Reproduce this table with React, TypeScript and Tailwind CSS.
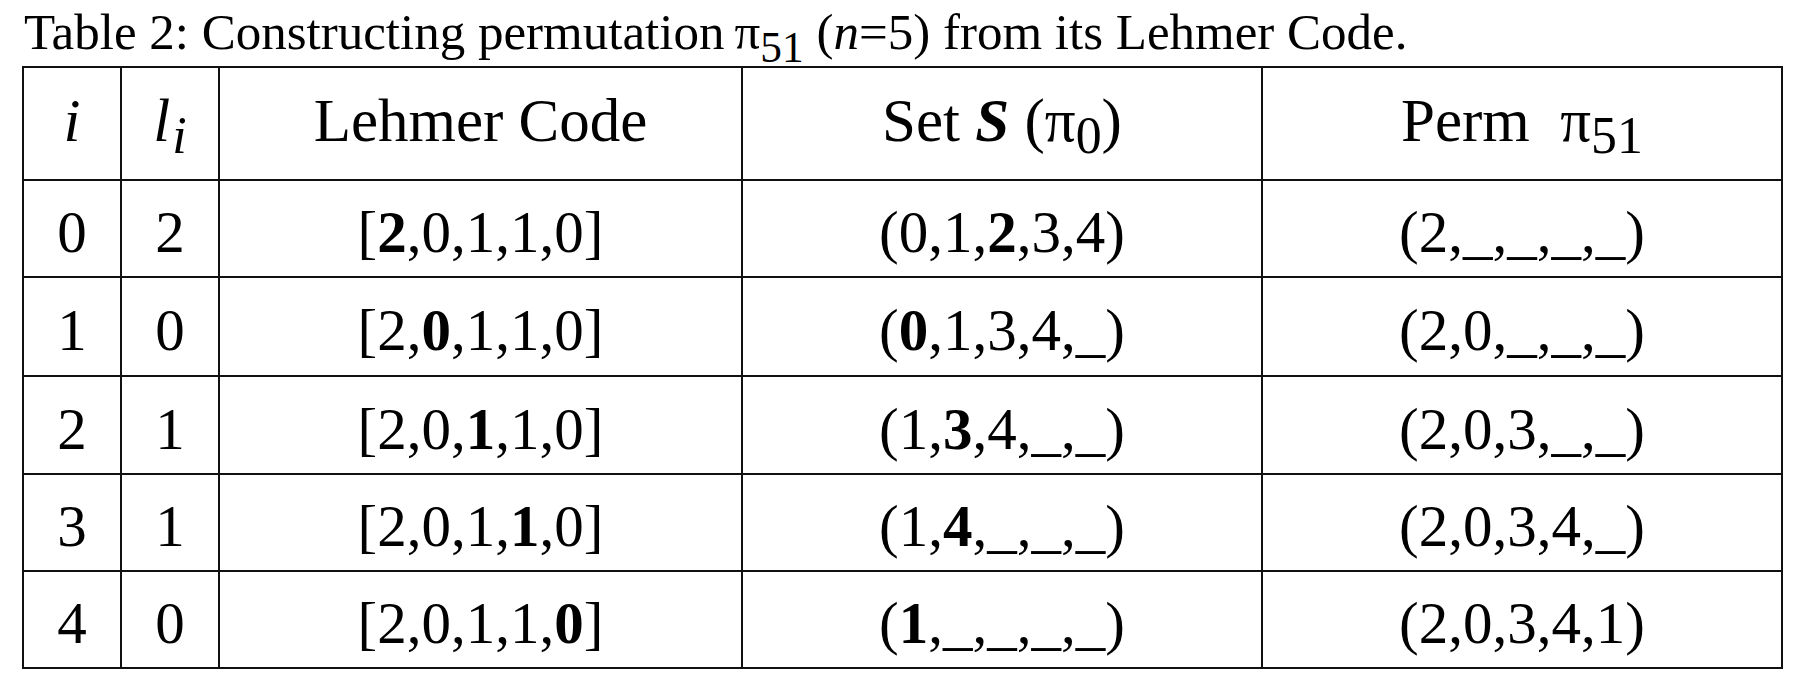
import React from 'react';

type Row = {
  i: string;
  l: string;
  code: string[];
  codeBold: number;
  set: string[];
  setBold: number;
  perm: string[];
};

const ROWS: Row[] = [
  { i: '0', l: '2', code: ['2', '0', '1', '1', '0'], codeBold: 0, set: ['0', '1', '2', '3', '4'], setBold: 2, perm: ['2', '_', '_', '_', '_'] },
  { i: '1', l: '0', code: ['2', '0', '1', '1', '0'], codeBold: 1, set: ['0', '1', '3', '4', '_'], setBold: 0, perm: ['2', '0', '_', '_', '_'] },
  { i: '2', l: '1', code: ['2', '0', '1', '1', '0'], codeBold: 2, set: ['1', '3', '4', '_', '_'], setBold: 1, perm: ['2', '0', '3', '_', '_'] },
  { i: '3', l: '1', code: ['2', '0', '1', '1', '0'], codeBold: 3, set: ['1', '4', '_', '_', '_'], setBold: 1, perm: ['2', '0', '3', '4', '_'] },
  { i: '4', l: '0', code: ['2', '0', '1', '1', '0'], codeBold: 4, set: ['1', '_', '_', '_', '_'], setBold: 0, perm: ['2', '0', '3', '4', '1'] },
];

// renders a list like [2,0,1,1,0] with one bold item
const Seq: React.FC<{ open: string; close: string; items: string[]; bold?: number }> = ({ open, close, items, bold }) => (
  <span>
    {open}
    {items.map((v, k) => (
      <React.Fragment key={k}>
        {k > 0 && ','}
        {k === bold ? <b className="font-bold">{v}</b> : v}
      </React.Fragment>
    ))}
    {close}
  </span>
);

const Sub: React.FC<{ children: React.ReactNode }> = ({ children }) => (
  <span className="relative top-[0.3em] text-[0.85em]">{children}</span>
);

const head = 'bg-white flex items-center justify-center text-[61px] leading-none pb-[6px]';
const cell = 'bg-white flex items-center justify-center text-[59px] leading-none pt-[8px]';

export default function App() {
  return (
    <div className="w-[1812px] h-[686px] bg-white text-black overflow-hidden" style={{ fontFamily: '"Liberation Serif", "Times New Roman", serif' }}>
      <div className="h-[66px] pl-[24px] pt-[7px] text-[51px] leading-none whitespace-nowrap">
        Table 2: Constructing permutation{'\u2009'}π<Sub>51</Sub> (<i>n</i>=5) from its Lehmer Code.
      </div>

      <div className="ml-[22px] w-fit grid grid-cols-[96px_96px_521px_518px_518px] grid-rows-[111px_95px_97px_96px_95px_95px] gap-[2px] p-[2px] bg-[#111]">
        <div className={head}><i>i</i></div>
        <div className={head}>
          <i>l</i>
          <i className="relative top-[0.3em] text-[0.85em] ml-[2px]">i</i>
        </div>
        <div className={head}>Lehmer Code</div>
        <div className={head}>
          Set&nbsp;<b className="font-bold italic">S</b>&nbsp;(π<Sub>0</Sub>)
        </div>
        <div className={head}>
          Perm&nbsp;&nbsp;π<Sub>51</Sub>
        </div>

        {ROWS.map((r) => (
          <React.Fragment key={r.i}>
            <div className={cell}>{r.i}</div>
            <div className={cell}>{r.l}</div>
            <div className={cell}>
              <Seq open="[" close="]" items={r.code} bold={r.codeBold} />
            </div>
            <div className={cell}>
              <Seq open="(" close=")" items={r.set} bold={r.setBold} />
            </div>
            <div className={cell}>
              <Seq open="(" close=")" items={r.perm} />
            </div>
          </React.Fragment>
        ))}
      </div>
    </div>
  );
}
